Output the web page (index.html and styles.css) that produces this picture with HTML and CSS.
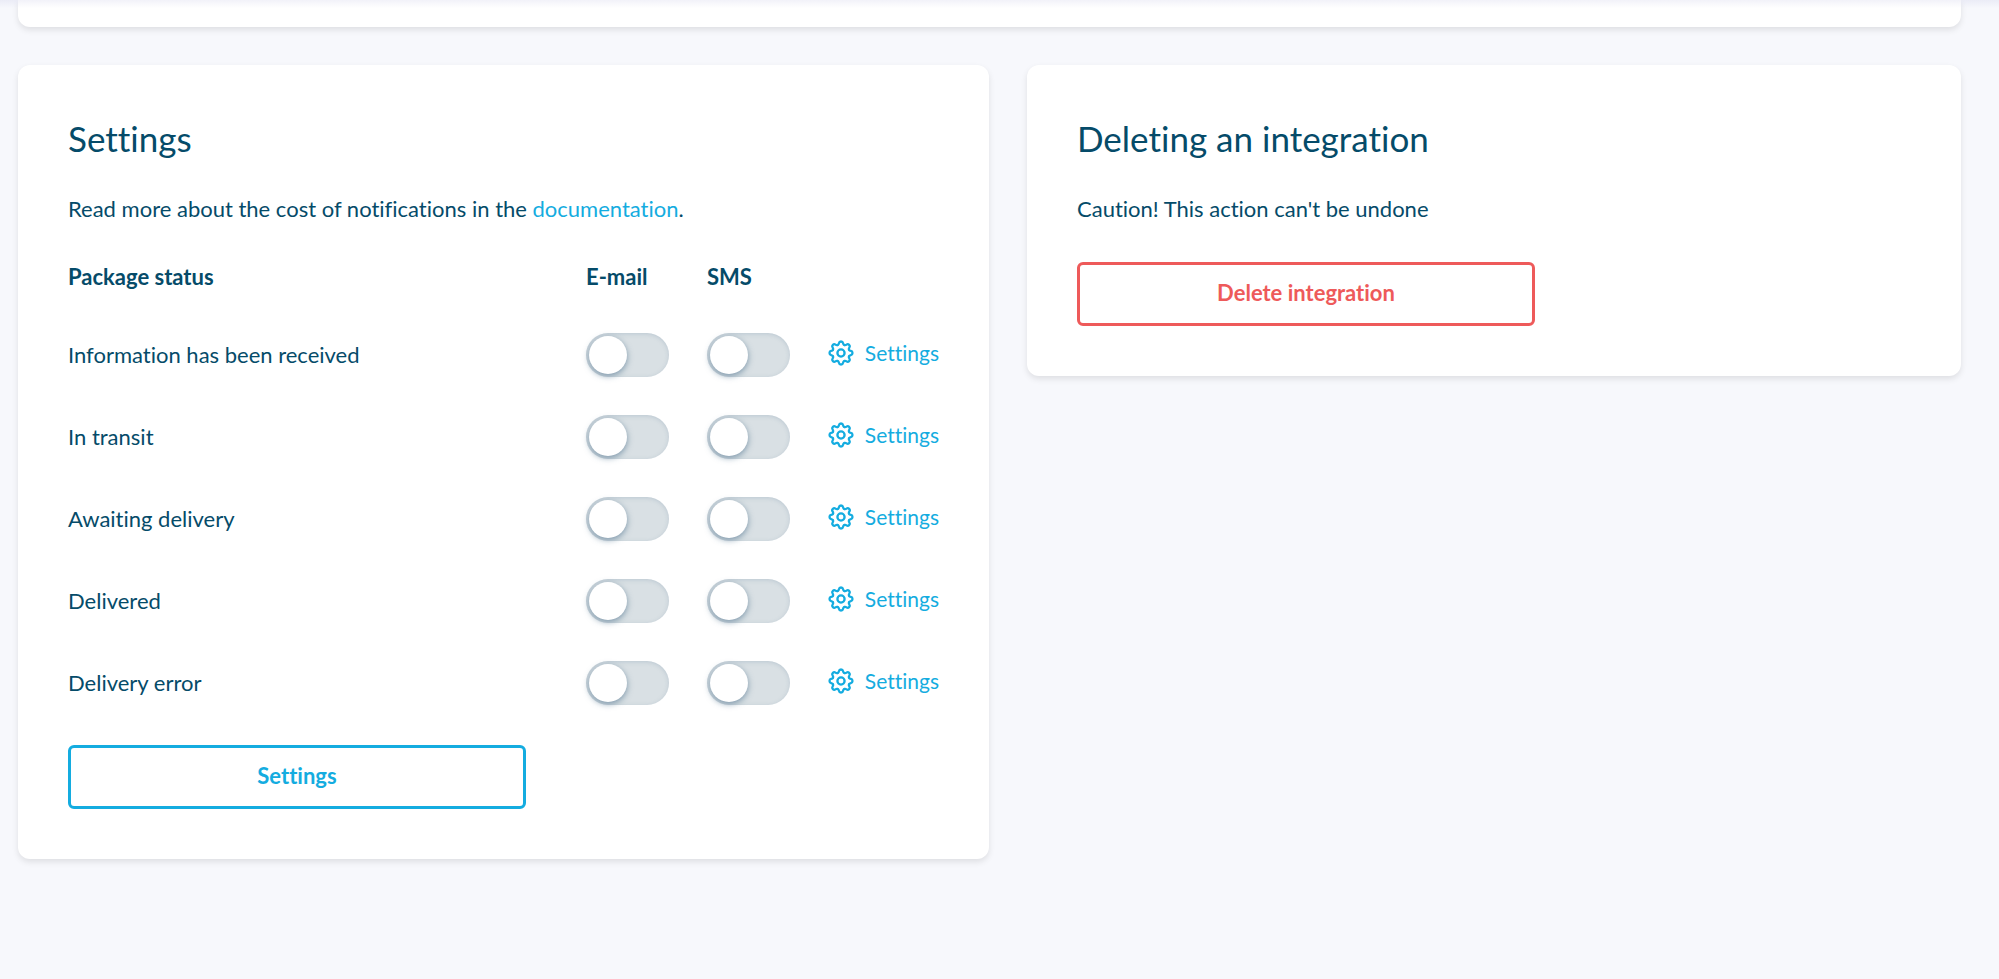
FILE: index.html
```html
<!DOCTYPE html>
<html lang="en">
<head>
<meta charset="utf-8">
<title>Integration settings</title>
<link rel="stylesheet" href="styles.css">
</head>
<body>
<svg class="sprite" aria-hidden="true">
  <symbol id="gear" viewBox="-13 -13 26 26">
    <g fill="none" stroke="currentColor" stroke-width="2.3" stroke-linecap="round">
      <path id="tooth" d="M-3.3 -8C-1 -9 -3.2 -11.5 0 -11.5S1 -9 3.3 -8"/>
      <use href="#tooth" transform="rotate(45)"/>
      <use href="#tooth" transform="rotate(90)"/>
      <use href="#tooth" transform="rotate(135)"/>
      <use href="#tooth" transform="rotate(180)"/>
      <use href="#tooth" transform="rotate(225)"/>
      <use href="#tooth" transform="rotate(270)"/>
      <use href="#tooth" transform="rotate(315)"/>
      <circle r="3.6"/>
    </g>
  </symbol>
</svg>
<div class="top-shade"></div>
<main class="page">
  <section class="card card-previous"></section>
  <div class="columns">
    <section class="card">
      <h2 class="title">Settings</h2>
      <p class="text">Read more about the cost of notifications in the <a class="link" href="#">documentation</a>.</p>
      <table class="statuses">
        <thead>
          <tr><th class="name" scope="col">Package status</th><th scope="col">E-mail</th><th scope="col">SMS</th><td class="action"></td></tr>
        </thead>
        <tbody>
          <tr>
            <td>Information has been received</td>
            <td><input class="toggle" type="checkbox" aria-label="Information has been received: e-mail"></td>
            <td><input class="toggle" type="checkbox" aria-label="Information has been received: SMS"></td>
            <td><a class="link row-link" href="#"><svg class="icon"><use href="#gear"/></svg>Settings</a></td>
          </tr>
          <tr>
            <td>In transit</td>
            <td><input class="toggle" type="checkbox" aria-label="In transit: e-mail"></td>
            <td><input class="toggle" type="checkbox" aria-label="In transit: SMS"></td>
            <td><a class="link row-link" href="#"><svg class="icon"><use href="#gear"/></svg>Settings</a></td>
          </tr>
          <tr>
            <td>Awaiting delivery</td>
            <td><input class="toggle" type="checkbox" aria-label="Awaiting delivery: e-mail"></td>
            <td><input class="toggle" type="checkbox" aria-label="Awaiting delivery: SMS"></td>
            <td><a class="link row-link" href="#"><svg class="icon"><use href="#gear"/></svg>Settings</a></td>
          </tr>
          <tr>
            <td>Delivered</td>
            <td><input class="toggle" type="checkbox" aria-label="Delivered: e-mail"></td>
            <td><input class="toggle" type="checkbox" aria-label="Delivered: SMS"></td>
            <td><a class="link row-link" href="#"><svg class="icon"><use href="#gear"/></svg>Settings</a></td>
          </tr>
          <tr>
            <td>Delivery error</td>
            <td><input class="toggle" type="checkbox" aria-label="Delivery error: e-mail"></td>
            <td><input class="toggle" type="checkbox" aria-label="Delivery error: SMS"></td>
            <td><a class="link row-link" href="#"><svg class="icon"><use href="#gear"/></svg>Settings</a></td>
          </tr>
        </tbody>
      </table>
      <button class="button" type="button">Settings</button>
    </section>
    <section class="card">
      <h2 class="title">Deleting an integration</h2>
      <p class="text">Caution! This action can't be undone</p>
      <button class="button button-danger" type="button">Delete integration</button>
    </section>
  </div>
</main>
</body>
</html>
```
FILE: styles.css
```css
* {
  box-sizing: border-box;
}

body {
  margin: 0;
  background: #f7f8fc;
  color: #054b69;
  font: 22px/32px Lato, "Open Sans", sans-serif;
  font-variant-ligatures: none;
}

.sprite {
  position: absolute;
  width: 0;
  height: 0;
}

.top-shade {
  position: absolute;
  top: 0;
  left: 0;
  right: 0;
  height: 8px;
  background: linear-gradient(rgba(90, 90, 180, 0.08), rgba(90, 90, 180, 0));
}

.page {
  padding: 0 38px 38px 18px;
}

.card {
  padding: 50px;
  border-radius: 12px;
  background: #fff;
  box-shadow: 0 3px 6px rgba(0, 0, 0, 0.1);
}

.card-previous {
  padding: 0 0 27px;
  border-radius: 0 0 12px 12px;
}

.columns {
  display: grid;
  grid-template-columns: 971fr 934fr;
  align-items: start;
  gap: 38px;
  margin-top: 38px;
}

.title {
  margin: 0 0 32px;
  font-size: 35px;
  line-height: 46px;
  font-weight: 400;
}

.text {
  margin: 0 0 37px;
}

.statuses {
  width: 100%;
  margin: -22px 0 21px;
  border-collapse: collapse;
  table-layout: fixed;
}

.statuses th,
.statuses td {
  width: 121px;
  height: 82px;
  padding: 0;
  text-align: left;
  vertical-align: middle;
}

.statuses thead th,
.statuses thead td {
  height: 74px;
}

.statuses .name {
  width: auto;
}

.statuses .action {
  width: 111px;
}

.toggle {
  display: block;
  appearance: none;
  width: 83px;
  height: 44px;
  margin: 0;
  padding: 3px;
  border-radius: 22px;
  background: #d9e0e4;
  box-shadow: inset 0 1px 4px rgba(120, 145, 170, 0.3);
  cursor: pointer;
}

.toggle::before {
  content: "";
  display: block;
  width: 38px;
  height: 38px;
  border-radius: 50%;
  background: #fff;
  box-shadow: 0 2px 6px rgba(60, 100, 130, 0.6);
}

.toggle:checked {
  background: #14ace0;
}

.toggle:checked::before {
  margin-left: auto;
}

.link {
  color: #14ace0;
  text-decoration: none;
}

.row-link {
  display: flex;
  align-items: center;
  justify-content: space-between;
  padding-bottom: 4px;
  font-size: 21px;
}

.icon {
  width: 26px;
  height: 26px;
}

.button {
  display: block;
  width: 458px;
  max-width: 100%;
  height: 64px;
  padding: 0 0 2px;
  border: 3px solid #14ace0;
  border-radius: 6px;
  background: #fff;
  color: #14ace0;
  font: inherit;
  font-weight: 700;
  font-variant-ligatures: none;
  cursor: pointer;
}

.button-danger {
  border-color: #ee5a5a;
  color: #ee5a5a;
}
```
